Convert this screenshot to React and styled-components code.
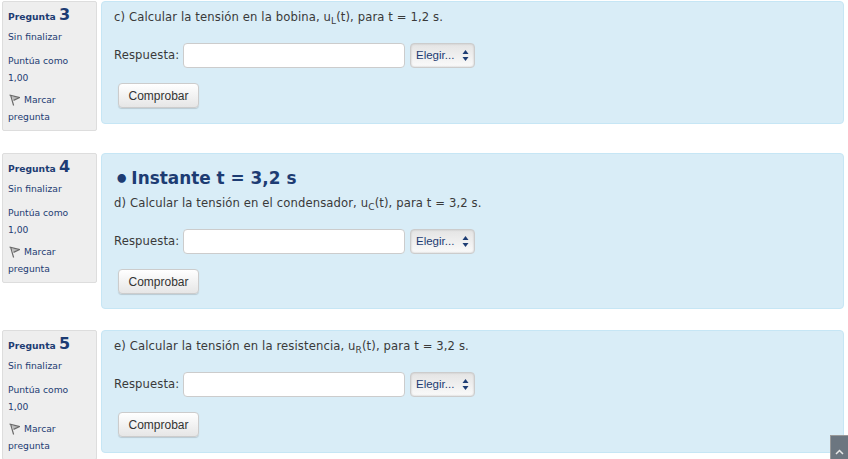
import React from 'react';
import styled, { createGlobalStyle } from 'styled-components';

const Global = createGlobalStyle`
  html, body { margin: 0; padding: 0; background: #fff; height: 100%; overflow: hidden; }
  body { font-family: "DejaVu Sans", Verdana, sans-serif; color: #3a3a3a; }
`;
const Page = styled.div`
  width: 848px; height: 459px; overflow: hidden; position: relative; box-sizing: border-box;
  padding: 1px 4px 0 2px; display: flex; flex-direction: column; gap: 22px;
`;
const Question = styled.section`
  display: flex; align-items: flex-start; gap: 4px; flex: none;
  margin-top: ${p => p.$shift || 0}px;
`;
const Info = styled.aside`
  width: 95px; height: 130px; flex: none; box-sizing: border-box; background: #eee;
  border: 1px solid #ddd; border-radius: 2px; padding: 3px 5px 0 5px;
  font-size: 9.2px; line-height: 17px; color: #1d3c73;
`;
const QNo = styled.h3`
  margin: 0; font-size: 9.2px; font-weight: 700; line-height: 19px; color: #1d3c73;
  height: 22px;
  span { font-size: 16px; margin-left: 0; }
`;
const State = styled.div`margin-bottom: 7px; margin-top: 1px;`;
const Grade = styled.div`margin-bottom: 5px;`;
const Flag = styled.div`
  svg { vertical-align: -3px; margin: 0 4px 0 1px; }
`;
const Content = styled.div`
  flex: none; width: 743px; height: ${p => p.$h}px; box-sizing: border-box;
  background: #d9edf7; border: 1px solid #c6e6f5; border-radius: 4px; padding: 0 12px;
`;
const Heading = styled.h3`
  margin: 12px 0 0; font-size: 16.9px; line-height: 24px; font-weight: 700; color: #1d3c73; white-space: nowrap;
`;
const Bullet = styled.span`
  font-size: 24px; line-height: 0; vertical-align: -4px; margin-right: 2px;
`;
const Prompt = styled.p`
  margin: ${p => p.$top}px 0 0; font-size: 11.62px; line-height: 20px; color: #3a3a3a; white-space: nowrap;
  letter-spacing: 0.01em;
  sub { font-size: 9px; line-height: 0; vertical-align: -3px; }
`;
const Answer = styled.div`
  display: flex; align-items: center; margin-top: 15px; height: 26px; font-size: 11.6px; color: #3a3a3a;
`;
const Label = styled.label`width: 69px; flex: none; white-space: nowrap; letter-spacing: 0.01em;`;
const Field = styled.input`
  width: 222px; height: 25px; box-sizing: border-box; background: #fff; border: 1px solid #ccc;
  border-radius: 4px; padding: 0; margin: 0; flex: none;
`;
const Unit = styled.div`
  width: 65px; height: 25px; margin-left: 5px; box-sizing: border-box; flex: none;
  border: 1px solid #ccc; border-radius: 4px; background: linear-gradient(#e4e4e4, #fafafa);
  box-shadow: inset 0 0 2px #bbb; display: flex; align-items: center; justify-content: space-between;
  padding: 0 5px; font: 11.5px "Liberation Sans", Arial, sans-serif; color: #1d3c73;
`;
const Check = styled.button`
  display: block; margin: 15px 0 0 4px; width: 81px; height: 25px; padding: 0; box-sizing: border-box;
  border: 1px solid #ccc; border-radius: 4px; background: linear-gradient(#fff, #e6e6e6);
  box-shadow: 0 1px 1px rgba(0,0,0,.15); font: 12px "Liberation Sans", Arial, sans-serif; color: #333;
`;
const ToTop = styled.a`
  position: absolute; right: 0; bottom: 0; width: 18px; height: 24px; background: #6c7680;
  border-top: 1px solid #999; border-left: 1px solid #999; box-sizing: border-box;
  display: flex; align-items: flex-end; justify-content: center; padding-bottom: 4px;
`;

const FlagIcon = () => (
  <svg width="11" height="12" viewBox="0 0 11 12" fill="none">
    <path d="M2 2 L9 3.8 L4.5 6 Z" fill="#bbb" />
    <path d="M.5 1 L10.5 3.6 L4.5 6.4 M1.6 1.2 L4.6 11.5" stroke="#6a6a6a" strokeWidth="1.2" />
  </svg>
);
const Arrows = () => (
  <svg width="7" height="11" viewBox="0 0 7 11" fill="#1d3c73"><path d="M3.5 0 L6.5 4 H.5 Z M3.5 11 L6.5 7 H.5 Z" /></svg>
);

const questions = [
  { n: 3, h: 123, letter: 'c', text: 'Calcular la tensión en la bobina, u', sub: 'L', time: '1,2' },
  { n: 4, h: 156, heading: 'Instante t = 3,2 s', letter: 'd', text: 'Calcular la tensión en el condensador, u', sub: 'C', time: '3,2' },
  { n: 5, h: 123, shift: -1, letter: 'e', text: 'Calcular la tensión en la resistencia, u', sub: 'R', time: '3,2' },
];

export default function App() {
  return (
    <Page>
      <Global />
      {questions.map(q => (
        <Question key={q.n} $shift={q.shift}>
          <Info>
            <QNo>Pregunta <span>{q.n}</span></QNo>
            <State>Sin finalizar</State>
            <Grade>Puntúa como 1,00</Grade>
            <Flag><FlagIcon />Marcar pregunta</Flag>
          </Info>
          <Content $h={q.h}>
            {q.heading && <Heading><Bullet>•</Bullet>{q.heading}</Heading>}
            <Prompt $top={q.heading ? 3 : 5}>{q.letter}) {q.text}<sub>{q.sub}</sub>(t), para t = {q.time} s.</Prompt>
            <Answer>
              <Label>Respuesta:</Label>
              <Field />
              <Unit>Elegir...<Arrows /></Unit>
            </Answer>
            <Check>Comprobar</Check>
          </Content>
        </Question>
      ))}
      <ToTop>
        <svg width="9" height="6" viewBox="0 0 9 6" fill="none" stroke="#e8e8e8" strokeWidth="1.5"><path d="M1 5 L4.5 1.5 L8 5" /></svg>
      </ToTop>
    </Page>
  );
}
